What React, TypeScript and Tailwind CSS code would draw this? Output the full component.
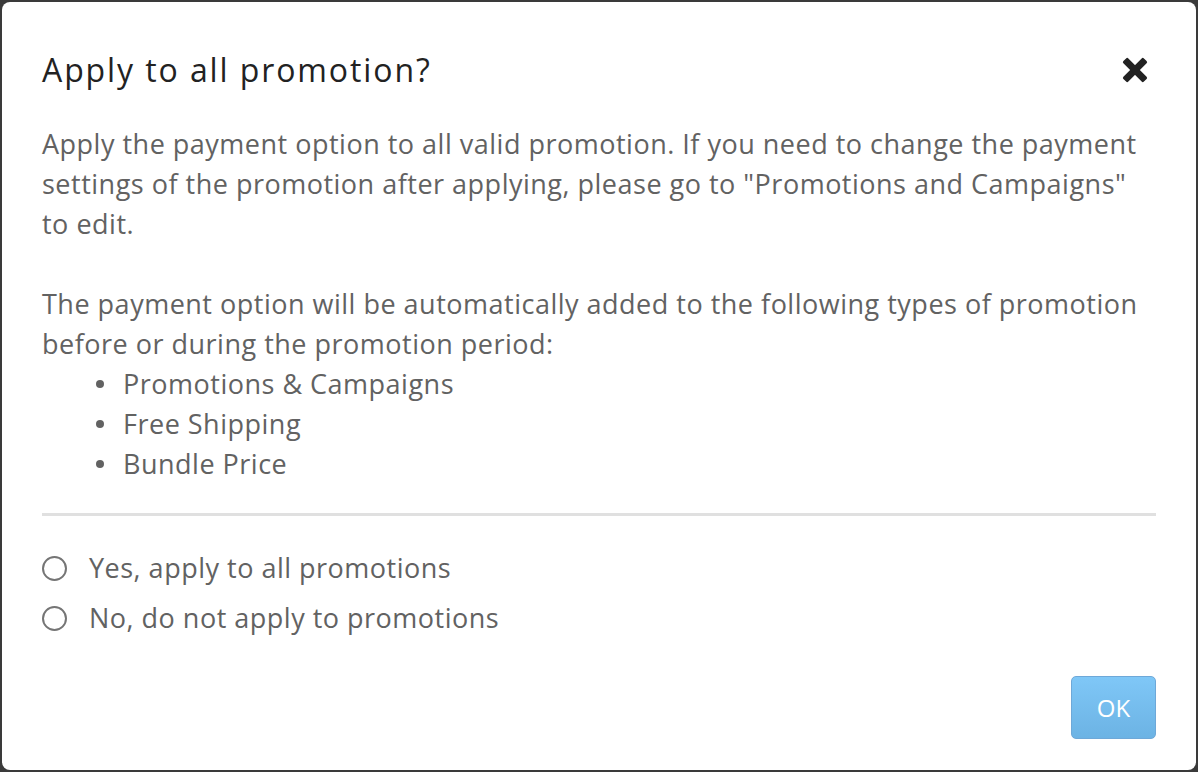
import { FC, useState } from 'react'

// 促销批量应用确认弹窗
const options = [
    { id: 'yes', label: 'Yes, apply to all promotions' },
    { id: 'no', label: 'No, do not apply to promotions' },
]

const promotionTypes = ['Promotions & Campaigns', 'Free Shipping', 'Bundle Price']

const CloseIcon: FC = () => (
    <svg width="26" height="26" viewBox="0 0 26 26" aria-hidden="true">
        <g fill="#222" transform="rotate(45 13 13)">
            <rect x="9.5" y="-1.5" width="7" height="29" rx="1.6" />
            <rect x="-1.5" y="9.5" width="29" height="7" rx="1.6" />
        </g>
    </svg>
)

const App: FC = () => {
    const [choice, setChoice] = useState<string | null>(null)

    return (
        // 外层：深色遮罩，弹窗几乎铺满
        <div
            className="w-[1198px] h-[772px] bg-[#3a3a3a] p-[2px] flex"
            style={{ fontFamily: '"Open Sans", "Noto Sans", Arial, sans-serif' }}
        >
            <div className="flex-1 bg-white rounded-[8px] flex flex-col pl-[40px] pr-[40px] pt-[48px]">
                {/* 标题栏 */}
                <div className="flex items-center justify-between h-[40px]">
                    <h2 className="text-[32px] leading-[40px] tracking-[1.9px] text-[#222]">Apply to all promotion?</h2>
                    <button className="mr-[8px] flex items-center justify-center" title="Close">
                        <CloseIcon />
                    </button>
                </div>

                {/* 正文说明 */}
                <div className="mt-[34px] max-w-[1102px] text-[27px] leading-[40px] tracking-[0.5px] text-[#626262]">
                    <p>
                        Apply the payment option to all valid promotion. If you need to change the payment
                        settings of the promotion after applying, please go to "Promotions and Campaigns"
                        to edit.
                    </p>
                    <p className="mt-[40px]">
                        The payment option will be automatically added to the following types of promotion
                        before or during the promotion period:
                    </p>
                    <ul className="pl-[54px]">
                        {promotionTypes.map((t) => (
                            <li key={t} className="flex items-center">
                                <span className="w-[8px] h-[8px] rounded-full bg-[#626262] mr-[19px]" />
                                {t}
                            </li>
                        ))}
                    </ul>
                </div>

                {/* 分割线 */}
                <div className="mt-[29px] h-[3px] bg-[#e0e0e0]" />

                {/* 选项 */}
                <div className="mt-[32px] flex flex-col gap-[10px]">
                    {options.map((o) => (
                        <label key={o.id} className="flex items-center h-[40px] cursor-pointer">
                            <span
                                onClick={() => setChoice(o.id)}
                                className="w-[25px] h-[25px] rounded-full border-2 border-[#757575] flex items-center justify-center"
                            >
                                {choice === o.id && <span className="w-[13px] h-[13px] rounded-full bg-[#4a90d9]" />}
                            </span>
                            <span className="ml-[22px] text-[27px] leading-[40px] tracking-[0.5px] text-[#626262]">{o.label}</span>
                        </label>
                    ))}
                </div>

                {/* 底部按钮 */}
                <div className="mt-[38px] flex justify-end">
                    <button className="w-[85px] h-[63px] rounded-[5px] border border-[#6ea8d8] bg-gradient-to-b from-[#7fc7f7] to-[#6cb3e4] text-white text-[24px]">
                        OK
                    </button>
                </div>
            </div>
        </div>
    )
}

export default App
